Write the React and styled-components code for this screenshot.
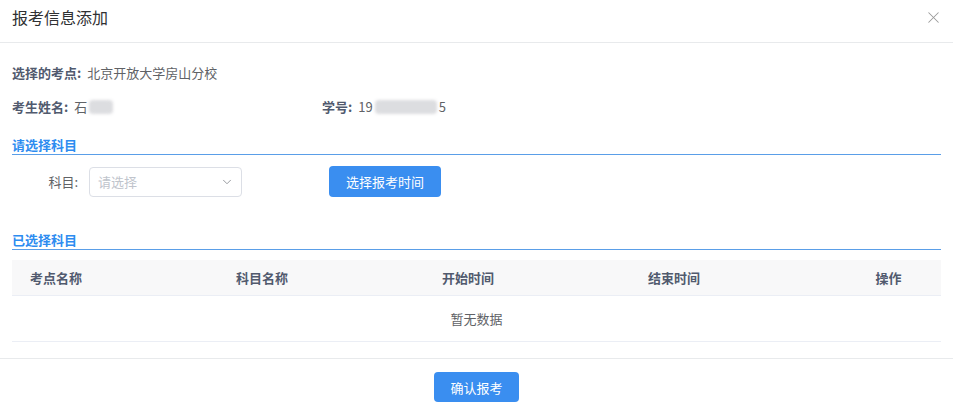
import React from 'react';
import styled, { createGlobalStyle } from 'styled-components';
import { X, ChevronDown } from 'lucide-react';

const GlobalStyle = createGlobalStyle`
  html, body {
    margin: 0;
    padding: 0;
    background: #fff;
  }
  body {
    font-family: 'Noto Sans CJK SC', 'Noto Sans', 'Liberation Sans', sans-serif;
    font-size: 13px;
    color: #606266;
  }
  * { box-sizing: border-box; }
`;

const Dialog = styled.div`
  width: 953px;
  min-height: 406px;
  display: flex;
  flex-direction: column;
`;

const Header = styled.header`
  height: 43px;
  padding: 0 10px 0 12px;
  display: flex;
  align-items: center;
  justify-content: space-between;
  border-bottom: 1px solid #e8eaec;
`;

const Title = styled.h1`
  margin: 0;
  font-size: 16px;
  font-weight: 400;
  color: #303133;
  line-height: 20px;
  margin-top: -8px;
`;

const Close = styled.button`
  border: 0;
  background: none;
  padding: 0;
  margin-top: -8px;
  display: flex;
  color: #9a9a9a;
  cursor: pointer;
`;

const Body = styled.div`
  padding: 20px 12px 16px;
  display: flex;
  flex-direction: column;
`;

const InfoRow = styled.div`
  display: flex;
  line-height: 20px;
  margin-bottom: 14px;
`;

const InfoItem = styled.div`
  width: ${p => p.$width || 'auto'};
  display: flex;
  align-items: center;
  color: #606266;
`;

const Label = styled.span`
  font-weight: 700;
  color: #515a6e;
  margin-right: 6px;
`;

const Masked = styled.span`
  display: inline-block;
  width: ${p => p.$w}px;
  height: 14px;
  background: #dcdde0;
  filter: blur(1.5px);
  border-radius: 4px;
  margin: 0 2px;
`;

const SectionTitle = styled.div`
  font-weight: 700;
  color: #2d8cf0;
  line-height: 18px;
  border-bottom: 1px solid #5a9ee8;
  margin-top: ${p => p.$top}px;
`;

const FormRow = styled.div`
  display: flex;
  align-items: center;
  margin-top: 11px;
  height: 31px;
`;

const FormLabel = styled.label`
  width: 66px;
  text-align: right;
  color: #606266;
  margin-right: 11px;
`;

const Select = styled.div`
  width: 153px;
  height: 30px;
  border: 1px solid #dcdfe6;
  border-radius: 4px;
  padding: 0 7px 0 8px;
  display: flex;
  align-items: center;
  justify-content: space-between;
  color: #c0c4cc;

  svg {
    color: #909399;
  }
`;

const Button = styled.button`
  height: ${p => p.$h || 31}px;
  padding: 0 ${p => p.$px || 15}px;
  margin-left: ${p => p.$ml || 0}px;
  border: 0;
  border-radius: 4px;
  background: #3a8ef0;
  color: #fff;
  font-family: inherit;
  font-size: 13px;
  cursor: pointer;
`;

const Table = styled.div`
  margin-top: 10px;
  display: flex;
  flex-direction: column;
`;

const HeadRow = styled.div`
  display: grid;
  grid-template-columns: repeat(4, 206px) 1fr;
  height: 36px;
  align-items: center;
  background: #f8f8f9;
  border-bottom: 1px solid #ebeef5;
`;

const HeadCell = styled.div`
  padding-left: ${p => (p.$center ? 0 : 18)}px;
  text-align: ${p => (p.$center ? 'center' : 'left')};
  font-weight: 700;
  color: #515a6e;
`;

const Empty = styled.div`
  height: 46px;
  display: flex;
  align-items: center;
  justify-content: center;
  border-bottom: 1px solid #ebeef5;
  color: #606266;
`;

const Footer = styled.footer`
  border-top: 1px solid #e8eaec;
  padding-top: 13px;
  display: flex;
  justify-content: center;
`;

const columns = ['考点名称', '科目名称', '开始时间', '结束时间'];

export default function App() {
  return (
    <Dialog>
      <GlobalStyle />
      <Header>
        <Title>报考信息添加</Title>
        <Close aria-label="关闭">
          <X size={19} strokeWidth={1.3} />
        </Close>
      </Header>

      <Body>
        <InfoRow>
          <InfoItem>
            <Label>选择的考点:</Label>北京开放大学房山分校
          </InfoItem>
        </InfoRow>
        <InfoRow>
          <InfoItem $width="310px">
            <Label>考生姓名:</Label>石<Masked $w={24} />
          </InfoItem>
          <InfoItem>
            <Label>学号:</Label>19<Masked $w={62} />5
          </InfoItem>
        </InfoRow>

        <SectionTitle $top={5}>请选择科目</SectionTitle>
        <FormRow>
          <FormLabel>科目:</FormLabel>
          <Select>
            请选择
            <ChevronDown size={14} strokeWidth={1.6} />
          </Select>
          <Button $ml={87} $px={17}>选择报考时间</Button>
        </FormRow>

        <SectionTitle $top={34}>已选择科目</SectionTitle>
        <Table>
          <HeadRow>
            {columns.map(c => (
              <HeadCell key={c}>{c}</HeadCell>
            ))}
            <HeadCell $center>操作</HeadCell>
          </HeadRow>
          <Empty>暂无数据</Empty>
        </Table>
      </Body>

      <Footer>
        <Button $h={30} $px={16}>确认报考</Button>
      </Footer>
    </Dialog>
  );
}
